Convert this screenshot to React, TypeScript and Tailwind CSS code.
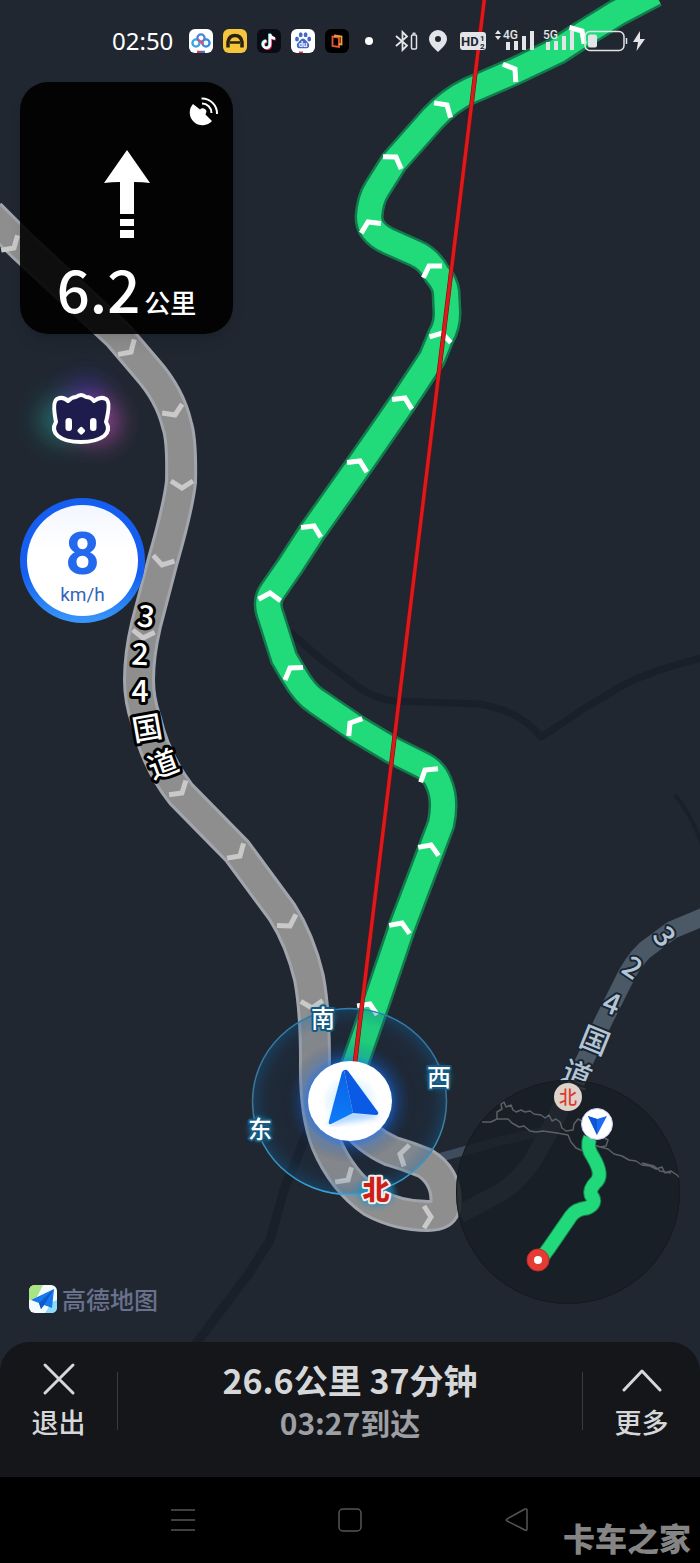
import React from "react";

type Mark = [x: number, y: number, angle: number];

const ROUTE =
  "M350 1078 L380 992 L402 927 L432 848 L441 824 Q446 800 439 784 Q434 770 420 764 L392 750 L357 729 L316 701 Q305 694 294 675 L284 658 L271 617 Q265 602 272 592 L290 566 L312 532 L358 467 L403 402 L432 358 L441 336 Q447 326 447 313 L446 292 Q445 283 437 274 Q429 259 415 253 L388 241 Q369 232 369 217 Q370 200 377 189 L394 162 L433 118 Q450 100 469 91 L515 71 L557 51 L583 34 L617 13 L655 -7";

const OLD_ROAD =
  "M-10 214 L22 246 L118 335 L147 369 Q170 395 177 425 Q182 440 181 482 Q178 508 163 560 L146 625 Q139 655 139 680 Q139 700 146 720 Q156 762 181 794 L237 851 L282 912 Q300 940 309 978 Q315 1010 315 1060 Q314 1112 326 1143 Q342 1181 372 1202 Q398 1216 428 1216 Q442 1216 445 1208 Q449 1178 425 1163 Q408 1156 391 1151 Q366 1140 350 1118";

const OVERVIEW_ROUTE =
  "M590 1138 Q586 1147 593 1157 Q603 1174 597 1181 Q589 1189 591 1195 Q598 1203 587 1208 Q576 1209 571 1216 L549 1248 L540 1260";

const ROUTE_MARKS: Mark[] = [
  [370, 1004, 24], [402, 923, 22], [431, 845, 22], [425, 770, -38], [350, 723, -52],
  [290, 668, -35], [270, 593, 4], [314, 526, 26], [360, 461, 26], [405, 398, 26],
  [442, 333, 15], [429, 266, -32], [368, 222, -26], [396, 157, 34], [447, 105, 42],
  [515, 69, 54], [582, 31, 48],
];

const ROAD_MARKS: Mark[] = [
  [14, 248, 138], [131, 352, 137], [175, 415, 156], [182, 488, 180], [162, 565, 195],
  [143, 638, 186], [182, 793, 140], [240, 856, 138], [290, 926, 150], [312, 1008, 178],
  [348, 1180, 138], [431, 1217, 90], [400, 1154, -76],
];

const NEAR_LABEL: [string, number, number, number][] = [
  ["3", 146, 616, 8], ["2", 140, 654, 3], ["4", 140, 691, 0], ["国", 147, 728, -10], ["道", 163, 764, -20],
];

const FAR_LABEL: [string, number, number, number][] = [
  ["3", 665, 936, 52], ["2", 633, 967, 34], ["4", 612, 1003, 22], ["国", 595, 1040, 22], ["道", 577, 1074, 22],
];

const COMPASS: [string, number, number][] = [["南", 323, 1018], ["西", 439, 1077], ["东", 260, 1129]];

function Chevrons({ marks, className }: { marks: Mark[]; className: string }) {
  return (
    <g className={className} fill="none" strokeWidth="5">
      {marks.map(([x, y, a]) => (
        <path key={`${x}-${y}`} d="M-11 7 L0 0 L11 7" transform={`translate(${x} ${y}) rotate(${a})`} />
      ))}
    </g>
  );
}

function RouteMap() {
  return (
    <svg
      className="absolute top-0 left-0 h-[1563px] w-[700px] font-['Noto_Sans_CJK_SC',sans-serif]"
      viewBox="0 0 700 1563"
      role="img"
      aria-label="导航地图"
    >
      <defs>
        <radialGradient id="halo">
          <stop offset="0.4" stopColor="#1673ff" stopOpacity="0.75" />
          <stop offset="0.5" stopColor="#1260d0" stopOpacity="0.32" />
          <stop offset="0.66" stopColor="#0b2f60" stopOpacity="0.08" />
          <stop offset="0.84" stopColor="#0e4a86" stopOpacity="0.1" />
          <stop offset="1" stopColor="#1167a8" stopOpacity="0.34" />
        </radialGradient>
        <linearGradient id="ring" x1="0" y1="0" x2="0" y2="1">
          <stop offset="0" stopColor="#2a7fae" />
          <stop offset="0.5" stopColor="#3d7390" />
          <stop offset="1" stopColor="#35a5dc" />
        </linearGradient>
        <radialGradient id="disc">
          <stop offset="0" stopColor="#b5e3ff" />
          <stop offset="0.8" stopColor="#ffffff" />
        </radialGradient>
        <linearGradient id="wing" x1="0" y1="0" x2="0" y2="1">
          <stop offset="0" stopColor="#0b62e4" />
          <stop offset="1" stopColor="#0c7cf8" />
        </linearGradient>
        <filter id="blur" x="-50%" y="-50%" width="200%" height="200%">
          <feGaussianBlur stdDeviation="3" />
        </filter>
        <clipPath id="overview">
          <circle cx="568" cy="1192" r="112" />
        </clipPath>
      </defs>

      <g fill="none" stroke="#1a2029" strokeLinejoin="round">
        <path strokeWidth="7" d="M290 632 L322 660 L360 688 Q376 699 395 701 L480 704 Q522 712 541 737 Q568 720 580 711 L625 684 Q660 667 710 656" />
        <path strokeWidth="9" d="M318 1105 L303 1143 L284 1190 L270 1240 L250 1272 L195 1345" />
        <path strokeWidth="4" d="M675 795 Q692 815 704 850" />
      </g>
      <g fill="none" strokeLinejoin="round">
        <path stroke="#3f4c5e" strokeWidth="9" d="M438 1158 L500 1141 L550 1130" />
        <path stroke="#4b5967" strokeWidth="18" d="M710 914 L672 930 L645 950 Q632 962 622 984 L603 1022 L583 1064 L550 1130 L533 1160 Q518 1182 500 1193 L460 1214" />
      </g>

      <g fill="none" strokeLinejoin="round">
        <path stroke="#a2a6ac" strokeWidth="32" d={OLD_ROAD} />
        <path stroke="#8e8e8e" strokeWidth="26" d={OLD_ROAD} />
      </g>
      <Chevrons marks={ROAD_MARKS} className="stroke-[#c9c9c9]" />

      <g fill="none" strokeLinejoin="round">
        <path stroke="#137a4e" strokeWidth="29" d={ROUTE} />
        <path stroke="#21db7b" strokeWidth="24" d={ROUTE} />
      </g>
      <Chevrons marks={ROUTE_MARKS} className="stroke-white" />

      <g textAnchor="middle" strokeLinejoin="round" paintOrder="stroke">
        {NEAR_LABEL.map(([c, x, y, a]) => (
          <text key={c} transform={`translate(${x} ${y}) rotate(${a})`} y="11" fontSize="30" fontWeight="500" fill="#fff" stroke="#000" strokeWidth="6">{c}</text>
        ))}
        {FAR_LABEL.map(([c, x, y, a]) => (
          <text key={c} transform={`translate(${x} ${y}) rotate(${a})`} y="11" fontSize="29" fontWeight="500" fill="#b4c5d6" stroke="#1b2633" strokeWidth="4">{c}</text>
        ))}
      </g>

      <ellipse cx="349.500" cy="1101.500" rx="97" ry="93" fill="url(#halo)" />
      <ellipse cx="349.500" cy="1101.500" rx="97" ry="93" fill="none" stroke="url(#ring)" strokeWidth="1.500" />
      <path d="M484.500 -2 L355 1062" stroke="#6d0d12" strokeWidth="4.500" />
      <path d="M484.500 -2 L355 1062" stroke="#dc191b" strokeWidth="3.500" />
      <ellipse cx="350" cy="1101" rx="42" ry="40" fill="#fff" />
      <ellipse cx="350" cy="1101" rx="36" ry="34" fill="url(#disc)" />
      <path d="M330 1123 L350 1117 L377 1115" stroke="#2f86ff" fill="none" strokeWidth="6" opacity="0.4" filter="url(#blur)" />
      <path d="M344 1070 L353 1113 L331 1124 Q328 1125 329 1121 L342 1072 Z" fill="url(#wing)" />
      <path d="M344 1070 Q346 1069 348 1071 L378 1112 Q379 1115 376 1115 L353 1113 Z" fill="#0b5ae6" />

      <g textAnchor="middle" strokeLinejoin="round" paintOrder="stroke" fontSize="24" fontWeight="500">
        {COMPASS.map(([c, x, y]) => (
          <React.Fragment key={c}>
            <circle cx={x} cy={y} r="11" fill="#1b8fc4" opacity="0.6" filter="url(#blur)" />
            <text x={x} y={y + 9} fill="#fff" stroke="#145a83" strokeWidth="4">{c}</text>
          </React.Fragment>
        ))}
        <ellipse cx="376" cy="1192" rx="18" ry="14" fill="#1b8fc4" opacity="0.8" filter="url(#blur)" />
        <text x="376" y="1200" fontSize="27" fontWeight="900" fill="#cf1d17" stroke="#f1efec" strokeWidth="4">北</text>
      </g>

      <circle cx="568" cy="1192" r="112" fill="#191e24" fillOpacity="0.86" />
      <circle cx="568" cy="1192" r="111.500" fill="none" stroke="#161a20" />
      <g clipPath="url(#overview)" fill="none" stroke="#5b6067" strokeWidth="1.500" strokeLinejoin="round">
        <path d="M482 1122 L491 1122 L497 1119 L497 1112 L502 1109 L501 1104 L504 1102 L506 1107 L511 1105 L513 1110 L516 1112 L521 1110 L525 1112 L530 1111 L534 1114 L541 1115 L545 1118 L549 1115 L552 1121 L556 1119 L560 1122 L562 1128 L566 1131 L573 1130 L574 1124 L578 1119 L584 1122" />
        <path d="M497 1119 L508 1119 L512 1123 L519 1127 L524 1126 L530 1131 L536 1132 L543 1131 L550 1132 L557 1133 L568 1135 L571 1142 L576 1148 L583 1151 L592 1144 L600 1147 L606 1146 L608 1140 L603 1137 M600 1147 L608 1149 L614 1154 L622 1156 L629 1160 L636 1161 L642 1165 L650 1166 L656 1169 L662 1167 L665 1173 L671 1171 L677 1175 L680 1178 M642 1163 L654 1166 L660 1171 L671 1173" />
      </g>
      <g fill="none" strokeLinejoin="round">
        <path d={OVERVIEW_ROUTE} stroke="#14804c" strokeWidth="15" />
        <path d={OVERVIEW_ROUTE} stroke="#21d97a" strokeWidth="13" />
      </g>
      <circle cx="568" cy="1097" r="14" fill="#ddd3ca" />
      <text x="568" y="1104" textAnchor="middle" fontSize="18" fontWeight="500" fill="#dc3a30">北</text>
      <circle cx="597" cy="1124" r="15.500" fill="#fff" stroke="#c3cbf0" />
      <path d="M588 1116 L597 1119 L607 1116 L597 1135 Z" fill="#1a6df0" />
      <path d="M588 1116 L597 1119 L597 1135 Z" fill="#0f56d6" />
      <circle cx="538" cy="1260" r="11" fill="#e63a35" stroke="#c62a2a" />
      <circle cx="538" cy="1260" r="4" fill="#fff" />
    </svg>
  );
}

function Signal({ label, arrows }: { label: string; arrows?: boolean }) {
  return (
    <svg className="h-6 w-10" viewBox="0 0 40 24" fill="#e2e4e7">
      {arrows && <path d="M0 5 L3 1 L6 5 Z M0 7 L3 11 L6 7 Z" />}
      <text x={arrows ? 8 : 0} y="10" fontSize="12" fontWeight="500" fontFamily="Roboto, sans-serif">{label}</text>
      <g transform={arrows ? "translate(11 0)" : "translate(3 0)"}>
        <rect x="0" y="13" width="4" height="8" />
        <rect x="8" y="12" width="4" height="9" />
        <rect x="16" y="7" width="4" height="14" />
        <rect x="24" y="2" width="4" height="19" />
      </g>
    </svg>
  );
}

function StatusBar() {
  return (
    <header className="relative flex h-[82px] items-center pl-28 text-[#e2e4e7]">
      <time className="w-[62px] text-2xl text-white font-['Noto_Sans',sans-serif]">02:50</time>
      <div className="ml-[15px] flex gap-[10px]">
        <svg className="size-6 rounded-md bg-white" viewBox="0 0 24 24" fill="none" strokeWidth="2.300">
          <circle cx="7" cy="14" r="3.600" stroke="#39a4e6" />
          <circle cx="17" cy="14" r="3.600" stroke="#2f8be0" />
          <circle cx="12" cy="9" r="3.600" stroke="#4b83d8" />
          <path d="M9 10.500 L14.500 15.500" stroke="#e05567" />
          <path d="M8 23 h4" stroke="#e0344c" /><path d="M12 23 h4" stroke="#3b76e0" />
        </svg>
        <svg className="size-6 rounded-md bg-[#f5c63c]" viewBox="0 0 24 24" fill="none" stroke="#2a2110">
          <path d="M5 18.500 V13 Q6 6.500 12 6.500 Q18 6.500 19 13 V18.500" strokeWidth="3.500" />
          <path d="M7 13.500 H17" strokeWidth="2.500" />
        </svg>
        <svg className="size-6 rounded-md bg-[#0b0b14]" viewBox="0 0 24 24" fill="none" strokeWidth="2.500">
          <path d="M13 5 V15.500 A3.500 3.500 0 1 1 9.500 12 M13 5 Q13.500 9 18 9.500" stroke="#f0355b" transform="translate(.8 .8)" />
          <path d="M13 5 V15.500 A3.500 3.500 0 1 1 9.500 12 M13 5 Q13.500 9 18 9.500" stroke="#3ce0e0" transform="translate(-.6 -.6)" />
          <path d="M13 5 V15.500 A3.500 3.500 0 1 1 9.500 12 M13 5 Q13.500 9 18 9.500" stroke="#fff" />
        </svg>
        <svg className="size-6 rounded-md bg-white" viewBox="0 0 24 24" fill="#4668c8">
          <ellipse cx="6" cy="10" rx="1.900" ry="2.500" /><ellipse cx="9.700" cy="5.800" rx="1.900" ry="2.500" />
          <ellipse cx="14.600" cy="5.800" rx="1.900" ry="2.500" /><ellipse cx="18.200" cy="10" rx="1.900" ry="2.500" />
          <path d="M12 9.500 Q14 9.500 15.500 12 L18 15 Q19 19 15.500 19.300 H8.500 Q5 19 6 15 L8.500 12 Q10 9.500 12 9.500 Z" />
          <text x="12" y="17.500" textAnchor="middle" fontSize="7.500" fontWeight="700" fill="#fff" fontFamily="Roboto, sans-serif">du</text>
          <path d="M8 22.500 h4 v1.500 h-4z" fill="#e0344c" />
        </svg>
        <svg className="size-6 rounded-md bg-black" viewBox="0 0 24 24" fill="none" strokeWidth="1.800">
          <path d="M10 8 L7.500 7.500 V17 L14 18 V9 L10 8" stroke="#e8592a" />
          <path d="M10 8 V6.500 L16.500 7.500 V15.500 L14 15" stroke="#f0a03c" />
        </svg>
      </div>
      <span className="ml-4 size-2 rounded-full bg-white" />
      <svg className="ml-[22px] h-6 w-6" viewBox="0 0 24 24" fill="none" stroke="currentColor" strokeWidth="1.800">
        <path d="M1 7 L12 16.500 L7.500 21 V3 L12 7.500 L1 17" />
        <rect x="16.500" y="6" width="5" height="14" rx="1" strokeWidth="1.500" /><path d="M17.500 4.500 h3" />
      </svg>
      <svg className="ml-[9px] h-6 w-5" viewBox="0 0 20 24" fill="currentColor" fillRule="evenodd">
        <path d="M10 1 A9 9 0 0 1 19 10 C19 15 14 19 10 23 C6 19 1 15 1 10 A9 9 0 0 1 10 1 Z M10 7 A3 3 0 1 0 10 13 A3 3 0 1 0 10 7 Z" />
      </svg>
      <svg className="ml-3 h-6 w-[26px]" viewBox="0 0 26 24" fontFamily="Roboto, sans-serif" fontWeight="700">
        <rect y="3" width="26" height="18" rx="3" fill="#e2e4e7" />
        <text x="1" y="17" fontSize="13" fill="#20262f">HD</text>
        <text x="20" y="12" fontSize="8" fill="#20262f">1</text>
        <text x="20" y="20" fontSize="8" fill="#20262f">2</text>
      </svg>
      <div className="ml-[9px] flex gap-2"><Signal label="4G" arrows /><Signal label="5G" /></div>
      <svg className="h-6 w-[62px]" viewBox="0 0 62 24" fill="none" stroke="currentColor" strokeWidth="1.500">
        <rect x="2" y="2.500" width="39" height="19" rx="5" />
        <rect x="5" y="5.500" width="9" height="13" rx="2" fill="currentColor" stroke="none" />
        <path d="M43.500 9 v6" /><path d="M57 2 L50 13 H55 L53.500 22 L62 10 H57 Z" fill="currentColor" stroke="none" />
      </svg>
    </header>
  );
}

function TurnCard() {
  return (
    <section className="flex h-[252px] w-[213px] flex-col items-center rounded-[28px] bg-black/90 text-white shadow-lg" aria-label="下一步">
      <svg className="mt-[14px] mr-[14px] h-[30px] w-[30px] shrink-0 self-end" viewBox="0 0 30 30" fill="none" stroke="#fff" strokeWidth="2">
        <path d="M4 8 L11 13.500 Q12.500 11.500 15 12.500 Q18.500 14 17 17 L16.500 18.500 L23 25 A11.500 11.500 0 0 1 4 8 Z" fill="#fff" stroke="none" />
        <path d="M13 7.500 A9.500 9.500 0 0 1 22.500 17" /><path d="M12.500 2.500 A15 15 0 0 1 28 18" />
      </svg>
      <svg className="mt-6 h-[88px] w-12 shrink-0" viewBox="0 0 48 88" fill="#fff">
        <path d="M24 0 L47 33 Q40 32 31 32 V64 H17 V32 Q8 32 1 33 Z M17 69 H31 V76 H17 Z M17 80 H31 V88 H17 Z" />
      </svg>
      <p className="mt-4 flex items-baseline gap-1 leading-[68px]">
        <span className="text-[58px] font-medium">6.2</span>
        <span className="text-[26px] font-medium">公里</span>
      </p>
    </section>
  );
}

function Assistant() {
  return (
    <button type="button" aria-label="语音助手" className="mt-[22px] flex size-[124px] items-center justify-center">
      <svg className="size-full overflow-visible" viewBox="0 0 124 124">
        <defs><filter id="aura" x="-50%" y="-50%" width="200%" height="200%"><feGaussianBlur stdDeviation="12" /></filter></defs>
        <g filter="url(#aura)">
          <circle cx="42" cy="64" r="22" fill="#25857f" opacity="0.7" />
          <circle cx="66" cy="46" r="22" fill="#4335a8" opacity="0.7" />
          <circle cx="78" cy="66" r="21" fill="#a848a0" opacity="0.85" />
        </g>
        <path d="M36 66 Q32 46 37 43 Q43 40 48 45 Q52 41 56 41 Q61 37 66 41 Q71 41 74 45 Q80 40 86 43 Q91 46 86 66 Q91 74 84 80 Q76 86 61 86 Q45 86 38 80 Q31 74 36 66 Z" fill="#1e1c4d" stroke="#fff" strokeWidth="4" strokeLinejoin="round" />
        <g fill="#fff"><rect x="45.500" y="62" width="6.500" height="13" rx="3.200" /><rect x="70" y="62" width="6.500" height="13" rx="3.200" /><rect x="58" y="71.500" width="6.500" height="6.500" rx="1.800" transform="rotate(45 61.250 74.750)" /></g>
      </svg>
    </button>
  );
}

export default function App() {
  return (
    <main className="relative flex min-h-screen flex-col overflow-hidden bg-[#202731] font-['Noto_Sans_CJK_SC',sans-serif]">
      <RouteMap />
      <StatusBar />
      <div className="relative flex flex-1 flex-col items-start px-5">
        <TurnCard />
        <Assistant />
        <div className="mt-[18px] size-[125px] rounded-full bg-linear-to-b from-[#155ef0] from-60% to-[#3a97f7] p-[7px]">
          <div className="flex size-full flex-col items-center rounded-full bg-linear-to-b from-[#f3f6ff] to-white to-40% pt-5 font-[Roboto,sans-serif]">
            <strong className="text-[60px] leading-[58px] font-bold text-[#2468ee]">8</strong>
            <span className="text-[19px] leading-6 text-[#3564bd]">km/h</span>
          </div>
        </div>
        <div className="mt-auto mb-7 ml-2 flex items-center gap-1">
          <svg className="size-[30px]" viewBox="0 0 30 30">
            <rect x="1" y="1" width="28" height="28" rx="6" fill="#f3fbff" />
            <path d="M1 16 V7 Q1 1 7 1 H15 L8 15 Z" fill="#a9e585" />
            <path d="M17 29 L24 18 L29 16 V23 Q29 29 23 29 Z" fill="#8cdcf8" />
            <path d="M26 5 L3 16 L11 19 L13 25 L16 21 L24 24 Z" fill="#1878ee" />
            <path d="M26 5 L11 19 L13 25 L16 21 Z" fill="#0c5bc8" />
          </svg>
          <span className="text-2xl leading-7 font-medium text-[#69718c]">高德地图</span>
        </div>
      </div>

      <section className="relative flex rounded-t-[30px] bg-[#14161a] pt-5 pb-[37px] text-[#d6d7d9]">
        <button type="button" className="flex w-[117px] flex-col items-center gap-[6px]">
          <svg className="h-9 w-9" viewBox="0 0 36 36" fill="none" stroke="currentColor" strokeWidth="3" strokeLinecap="round"><path d="M4 3 L32 31 M32 3 L4 31" /></svg>
          <span className="text-[27px] leading-9 font-medium">退出</span>
        </button>
        <div className="h-[58px] w-px self-center bg-[#393b3f]" />
        <div className="flex flex-1 flex-col items-center gap-[6px]">
          <p className="text-[34px] leading-9 font-bold">26.6公里 37分钟</p>
          <p className="text-[30px] leading-9 font-bold text-[#9d9fa3]">03:27到达</p>
        </div>
        <div className="h-[58px] w-px self-center bg-[#393b3f]" />
        <button type="button" className="flex w-[117px] flex-col items-center gap-[6px]">
          <svg className="h-9 w-10" viewBox="0 0 40 36" fill="none" stroke="currentColor" strokeWidth="3" strokeLinecap="round" strokeLinejoin="round"><path d="M2 28 L20 9 L38 28" /></svg>
          <span className="text-[27px] leading-9 font-medium">更多</span>
        </button>
      </section>

      <nav className="relative flex h-[86px] items-center justify-center gap-[143px] bg-black text-[#555]">
        <button type="button" aria-label="最近任务"><svg className="size-6" viewBox="0 0 24 24" stroke="currentColor" strokeWidth="1.500"><path d="M0 2 H24 M0 12 H24 M0 22 H24" /></svg></button>
        <button type="button" aria-label="主屏幕"><svg className="size-6" viewBox="0 0 24 24" fill="none" stroke="currentColor" strokeWidth="1.500"><rect x="1" y="1" width="22" height="22" rx="4" /></svg></button>
        <button type="button" aria-label="返回"><svg className="size-6" viewBox="0 0 24 24" fill="none" stroke="currentColor" strokeWidth="1.500" strokeLinejoin="round"><path d="M2 11 L20 1 Q22 0.500 22 2 V21 Q22 23 20 22 L2 13 Q0.500 12 2 11 Z" /></svg></button>
        <span className="absolute right-[9px] bottom-[6px] text-[32px] leading-10 font-black text-[#858585]">卡车之家</span>
      </nav>
    </main>
  );
}
